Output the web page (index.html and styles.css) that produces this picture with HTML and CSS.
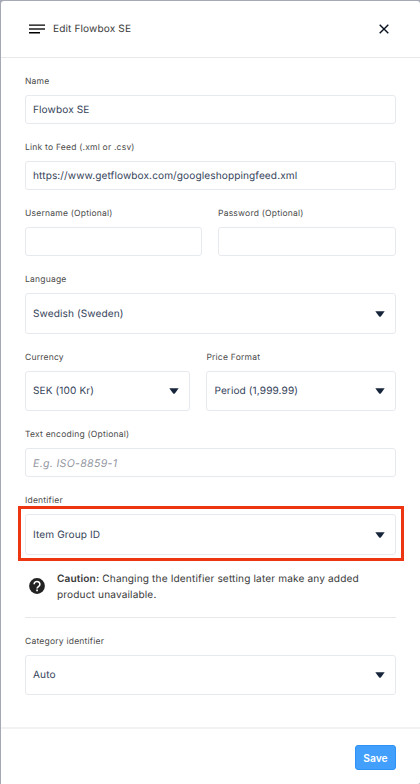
FILE: index.html
```html
<!DOCTYPE html>
<html lang="en">
<head>
<meta charset="utf-8">
<title>Edit Flowbox SE</title>
<link rel="stylesheet" href="styles.css">
</head>
<body>
<main class="modal">
  <header class="header">
    <svg class="menu-icon" width="16" height="10" viewBox="0 0 16 10"><path fill="#000" d="M0 .4h16v1.4H0zM0 8h11v1.4H0z"/><path fill="#555" d="M0 4h16v2H0z"/></svg>
    <h1 class="title">Edit Flowbox SE</h1>
    <svg class="close" width="10" height="10" viewBox="0 0 10 10"><path d="M.7.7l8.6 8.6M9.3.7L.7 9.3" stroke="#081020" stroke-width="1.4"/></svg>
  </header>
  <form class="body">
    <div class="group">
      <div class="label">Name</div>
      <div class="field"><span class="value">Flowbox SE</span></div>
    </div>
    <div class="group">
      <div class="label">Link to Feed (.xml or .csv)</div>
      <div class="field"><span class="value">https://www.getflowbox.com/googleshoppingfeed.xml</span></div>
    </div>
    <div class="row row-login">
      <div class="group"><div class="label">Username (Optional)</div><div class="field"></div></div>
      <div class="group"><div class="label">Password (Optional)</div><div class="field"></div></div>
    </div>
    <div class="group">
      <div class="label">Language</div>
      <div class="field select"><span class="value">Swedish (Sweden)</span><svg class="caret" width="10" height="6" viewBox="0 0 10 6"><path d="M.3.3h9.4L6 5.2Q5 6.2 4 5.2z"/></svg></div>
    </div>
    <div class="row row-currency">
      <div class="group">
        <div class="label">Currency</div>
        <div class="field select"><span class="value">SEK (100 Kr)</span><svg class="caret" width="10" height="6" viewBox="0 0 10 6"><path d="M.3.3h9.4L6 5.2Q5 6.2 4 5.2z"/></svg></div>
      </div>
      <div class="group">
        <div class="label">Price Format</div>
        <div class="field select"><span class="value">Period (1,999.99)</span><svg class="caret" width="10" height="6" viewBox="0 0 10 6"><path d="M.3.3h9.4L6 5.2Q5 6.2 4 5.2z"/></svg></div>
      </div>
    </div>
    <div class="group">
      <div class="label">Text encoding (Optional)</div>
      <div class="field"><span class="value placeholder">E.g. ISO-8859-1</span></div>
    </div>
    <div class="group highlighted">
      <div class="label">Identifier</div>
      <div class="field select"><span class="value">Item Group ID</span><svg class="caret" width="10" height="6" viewBox="0 0 10 6"><path d="M.3.3h9.4L6 5.2Q5 6.2 4 5.2z"/></svg></div>
    </div>
    <div class="caution">
      <svg class="help" width="16" height="16" viewBox="0 0 16 16"><circle cx="8" cy="8" r="7.9" fill="#222"/><path d="M5.1 6.2a2.9 2.7 0 1 1 4.8 2C8.8 9 8.1 9.2 8.1 10.6" fill="none" stroke="#fff" stroke-width="1.6"/><path d="M7.2 11.5h1.7v1.7H7.2z" fill="#fff"/></svg>
      <p class="caution-text"><b>Caution:</b> Changing the Identifier setting later make any added<br>product unavailable.</p>
    </div>
    <div class="group category">
      <div class="label">Category identifier</div>
      <div class="field select"><span class="value">Auto</span><svg class="caret" width="10" height="6" viewBox="0 0 10 6"><path d="M.3.3h9.4L6 5.2Q5 6.2 4 5.2z"/></svg></div>
    </div>
  </form>
  <footer class="footer"><button class="save" type="button">Save</button></footer>
</main>
</body>
</html>
```
FILE: styles.css
```css
* { box-sizing: border-box; }
body {
  margin: 0;
  height: 784px;
  padding: 1px 0 0 1px;
  background: #a4a9b5;
  font-family: Inter, "Liberation Sans", sans-serif;
  text-rendering: geometricPrecision;
  overflow: hidden;
}
.modal {
  height: 783px;
  display: flex;
  flex-direction: column;
  background: #fff;
  border-radius: 3px 3px 2px 0;
}
.header {
  height: 57px;
  display: flex;
  align-items: center;
  padding: 0 31px 0 28px;
  border-bottom: 1px solid #e6e7e9;
}
.title {
  margin: 0 auto 0 8px;
  font-size: 10.1px;
  letter-spacing: 0.12px;
  font-weight: 400;
  color: #3a3a3a;
}
.body { padding: 16px 24px 0; flex: 1; }
.group { margin-bottom: 16px; }
.label {
  height: 14px;
  margin-bottom: 7px;
  padding-top: 1px;
  font-size: 8.5px;
  line-height: 14px;
  letter-spacing: 0.22px;
  color: #4a4a4a;
  white-space: nowrap;
}
.field {
  height: 29px;
  display: flex;
  align-items: center;
  justify-content: space-between;
  padding: 0 10px 0 7px;
  border: 1px solid #e6e9ee;
  border-radius: 3px;
}
.select { height: 40.5px; }
.value {
  padding-top: 1px;
  font-size: 10.1px;
  letter-spacing: 0.1px;
  color: #35435a;
  white-space: nowrap;
}
.placeholder { font-style: italic; font-size: 10.6px; letter-spacing: 0.3px; color: #92969f; }
.caret { fill: #17253b; margin-top: 1.4px; }
.row { display: grid; }
.row-login { grid-template-columns: 177px 1fr; column-gap: 16px; }
.row-currency { grid-template-columns: 165px 1fr; column-gap: 16.4px; }
.highlighted { position: relative; margin-bottom: 0; }
.highlighted::after {
  content: "";
  position: absolute;
  inset: 13px -8px -6.4px -7px;
  border: 3px solid #ed3512;
}
.caution {
  height: 63px;
  display: flex;
  padding: 16px 0 0 4px;
  border-bottom: 1px solid #e6e7e9;
}
.help { margin: 7.5px 12px 0 0; flex: none; }
.caution-text {
  margin: 0;
  font-size: 10.1px;
  letter-spacing: 0.14px;
  line-height: 16px;
  color: #3a3a3a;
  white-space: nowrap;
}
.caution-text b { font-weight: 600; }
.category { margin-top: 16px; }
.footer {
  height: 57px;
  padding: 16px 24px 0;
  border-top: 2px solid #f1f2f4;
  text-align: right;
}
.save {
  width: 41px;
  height: 25px;
  padding: 0;
  border: 1px solid #2d92f5;
  border-radius: 3px;
  background: #429ffb;
  color: #fff;
  font: 600 10.3px Inter, sans-serif;
}
```
